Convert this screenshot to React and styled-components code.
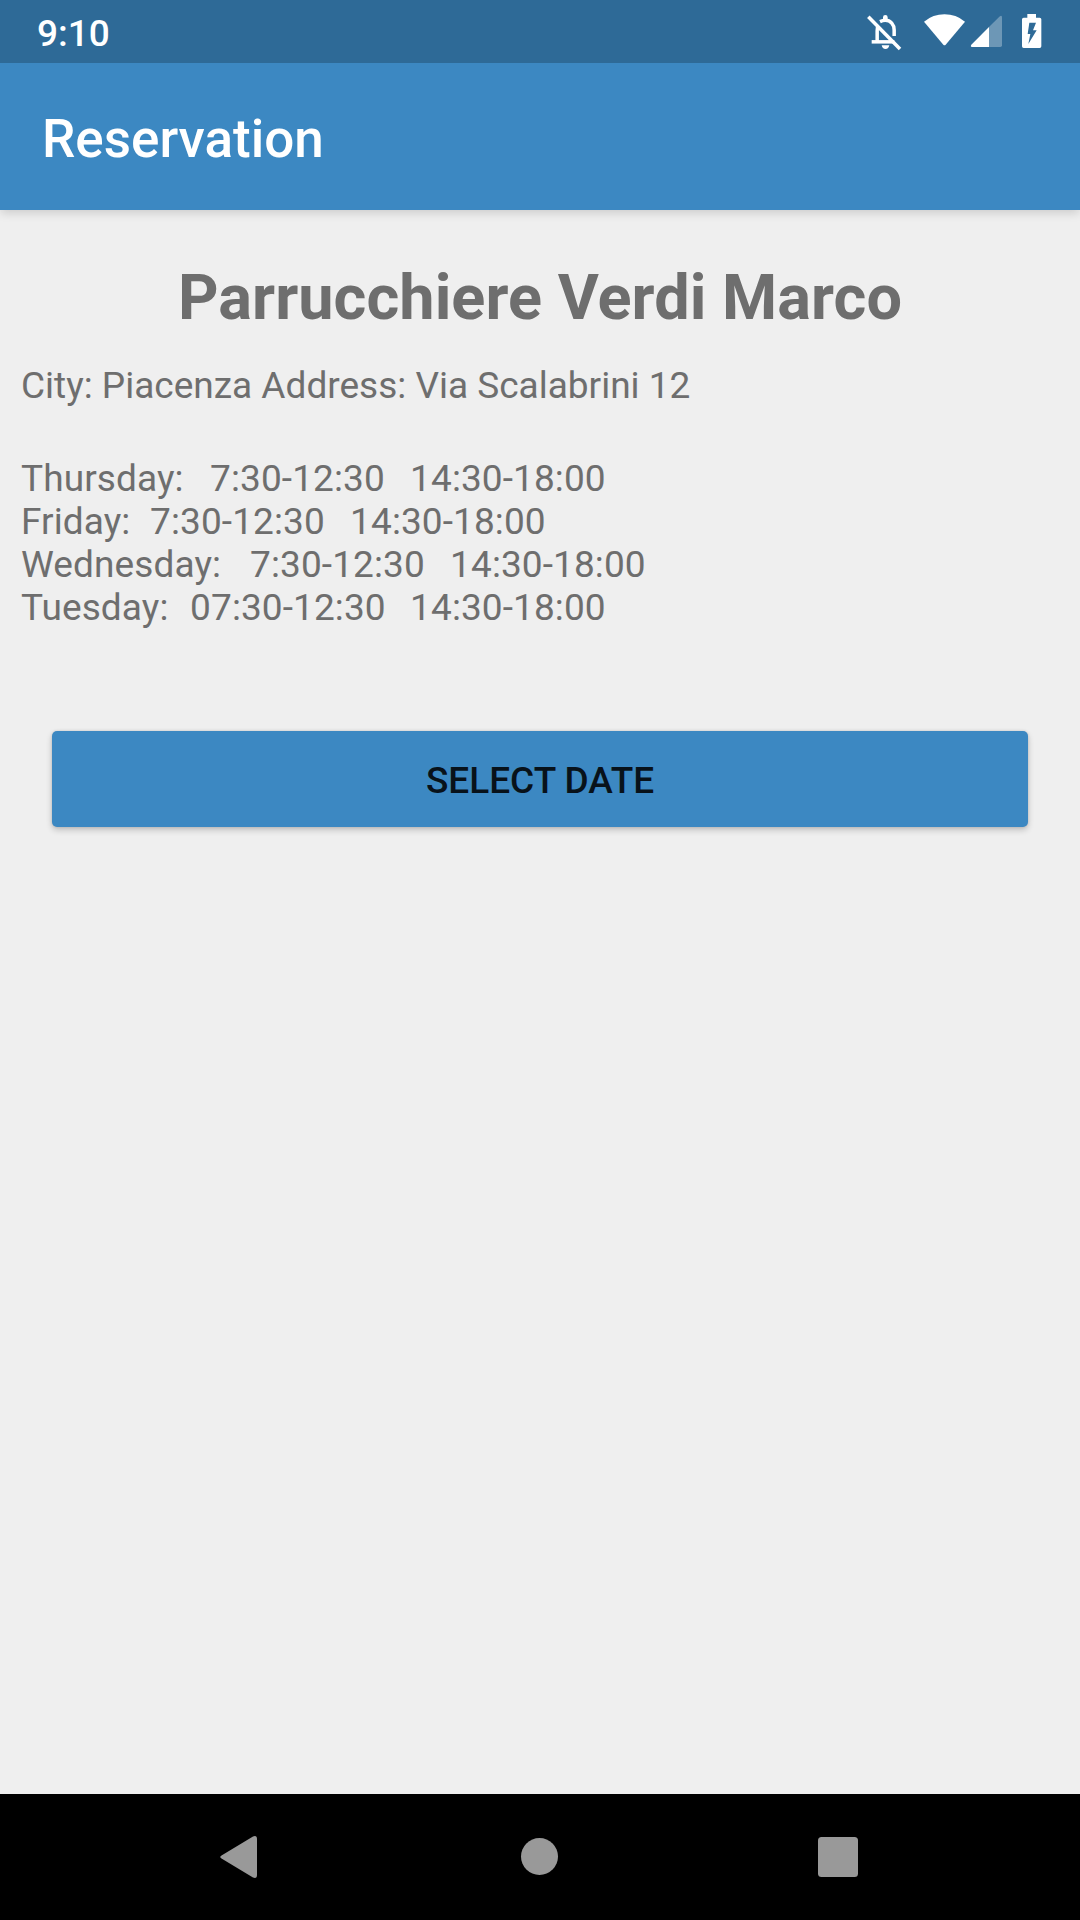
import React from "react";
import styled, { createGlobalStyle } from "styled-components";

const GlobalStyle = createGlobalStyle`
  * { box-sizing: border-box; }
  body { margin: 0; background: #efefef; }
`;

const Screen = styled.div`
  width: 1080px;
  height: 1920px;
  display: flex;
  flex-direction: column;
  overflow: hidden;
  background: #efefef;
  color: #6e6e6e;
  font-family: Roboto, "Liberation Sans", sans-serif;
  font-size: 37px;
  line-height: 43px;
`;

const StatusBar = styled.header`
  flex: none;
  height: 63px;
  padding: 0 38px 0 37px;
  display: flex;
  justify-content: space-between;
  background: #2e6a97;
  color: #fff;
`;

const Clock = styled.time`
  padding-top: 12px;
  font-weight: 500;
`;

const StatusIcons = styled.div`
  display: flex;
  padding-top: 12px;
`;

const StatusIcon = styled.svg`
  display: block;
  height: 40px;
  width: ${(p) => p.$width}px;
  margin-left: ${(p) => p.$gap || 0}px;
`;

const Toolbar = styled.div`
  flex: none;
  height: 147px;
  padding: 4px 42px 0;
  display: flex;
  align-items: center;
  background: #3c88c2;
  box-shadow: 0 4px 9px -1px rgba(0, 0, 0, 0.15);
  clip-path: inset(0 0 -20px 0);
`;

const ToolbarTitle = styled.h1`
  margin: 0;
  color: #fff;
  font-size: 53px;
  line-height: 62px;
  font-weight: 500;
`;

const Content = styled.main`
  flex: 1;
  display: flex;
  flex-direction: column;
  padding: 51px 21px 0;
`;

const ShopName = styled.h2`
  margin: 0;
  text-align: center;
  font-size: 63px;
  line-height: 74px;
  font-weight: 700;
  letter-spacing: 0.04px;
`;

const Address = styled.p`
  margin: 29px 0 0;
`;

const Hours = styled.div`
  display: flex;
  flex-direction: column;
  margin-top: 50px;
  letter-spacing: 0.1px;
`;

const HoursRow = styled.div`
  display: flex;
  white-space: pre;
`;

const Cell = styled.span`
  flex: none;
  width: ${(p) => (p.$width ? `${p.$width}px` : "auto")};
`;

const SelectButton = styled.button`
  height: 96px;
  margin: 102px 31px 0;
  padding: 2px 0 0;
  border: 0;
  border-radius: 5px;
  background: #3c88c2;
  box-shadow: 0 3px 6px rgba(0, 0, 0, 0.2), 0 0 3px rgba(0, 0, 0, 0.12);
  color: #08121a;
  font: 500 37px/43px Roboto, "Liberation Sans", sans-serif;
`;

const NavBar = styled.nav`
  flex: none;
  height: 126px;
  padding: 0 220px;
  display: flex;
  align-items: center;
  justify-content: space-between;
  background: #000;
`;

const NavIcon = styled.svg`
  display: block;
  width: 42px;
  height: 44px;
  fill: #999;
`;

const schedule = [
  { day: "Thursday:", dayWidth: 189.1, morning: "7:30-12:30", morningWidth: 200, afternoon: "14:30-18:00" },
  { day: "Friday:", dayWidth: 129.1, morning: "7:30-12:30", morningWidth: 200, afternoon: "14:30-18:00" },
  { day: "Wednesday:", dayWidth: 229.1, morning: "7:30-12:30", morningWidth: 200, afternoon: "14:30-18:00" },
  { day: "Tuesday:", dayWidth: 169.1, morning: "07:30-12:30", morningWidth: 220, afternoon: "14:30-18:00" },
];

export default function App() {
  return (
    <Screen>
      <GlobalStyle />
      <StatusBar>
        <Clock>9:10</Clock>
        <StatusIcons>
          <StatusIcon $width={36} viewBox="48 36 108 120">
            <g fill="none" stroke="#fff" strokeWidth="10.500">
              <path d="M55 50 150 147" />
              <path d="M65 125.500H133" />
              <path d="M81.500 124V92Q81.500 82 84 78" />
              <path d="M90 65Q98 61 106 61C122 61 132.500 74 132.500 90V108" />
            </g>
            <path fill="#fff" d="M99 62V52Q99 45 106 45T113 52V62ZM95 136H118Q116 147 106.500 147T95 136Z" />
          </StatusIcon>
          <StatusIcon $width={43} $gap={21} viewBox="219 36 129 120">
            <path fill="#fff" d="M222 65Q249 43 283.500 43T345 65L287 134Q283.500 138 280 134Z" />
          </StatusIcon>
          <StatusIcon $width={33} $gap={4} viewBox="360 36 99 120">
            <path fill="#fff" fillOpacity=".3" d="M417 81 448 50Q456 44 456 52V136Q456 141 451 141H417Z" />
            <path fill="#fff" d="M417 81V141H366Q360 140 364 134Z" />
          </StatusIcon>
          <StatusIcon $width={21} $gap={18} viewBox="513 36 63 120">
            <path
              fill="#fff"
              fillRule="evenodd"
              d="M532 42H558V53H569Q574 53 574 58V139Q574 144 569 144H521Q516 144 516 139V58Q516 53 521 53H532ZM538 68 533 102H541L535 132 560 91H549L558 68Z"
            />
          </StatusIcon>
        </StatusIcons>
      </StatusBar>
      <Toolbar>
        <ToolbarTitle>Reservation</ToolbarTitle>
      </Toolbar>
      <Content>
        <ShopName>Parrucchiere Verdi Marco</ShopName>
        <Address>City: Piacenza Address: Via Scalabrini 12</Address>
        <Hours>
          {schedule.map((row) => (
            <HoursRow key={row.day}>
              <Cell $width={row.dayWidth}>{row.day}</Cell>
              <Cell $width={row.morningWidth}>{row.morning}</Cell>
              <Cell>{row.afternoon}</Cell>
            </HoursRow>
          ))}
        </Hours>
        <SelectButton type="button">SELECT DATE</SelectButton>
      </Content>
      <NavBar>
        <NavIcon viewBox="0 0 42 44">
          <path d="M1.500 20.500 33 1.500Q37 0 37 4V40Q37 44 33 42.500L1.500 23.500Q-1 22 1.500 20.500Z" />
        </NavIcon>
        <NavIcon viewBox="0 0 42 44">
          <circle cx="20.500" cy="21.500" r="18.500" />
        </NavIcon>
        <NavIcon viewBox="0 0 42 44">
          <rect x="0" y="2" width="40" height="40" rx="3.500" />
        </NavIcon>
      </NavBar>
    </Screen>
  );
}
